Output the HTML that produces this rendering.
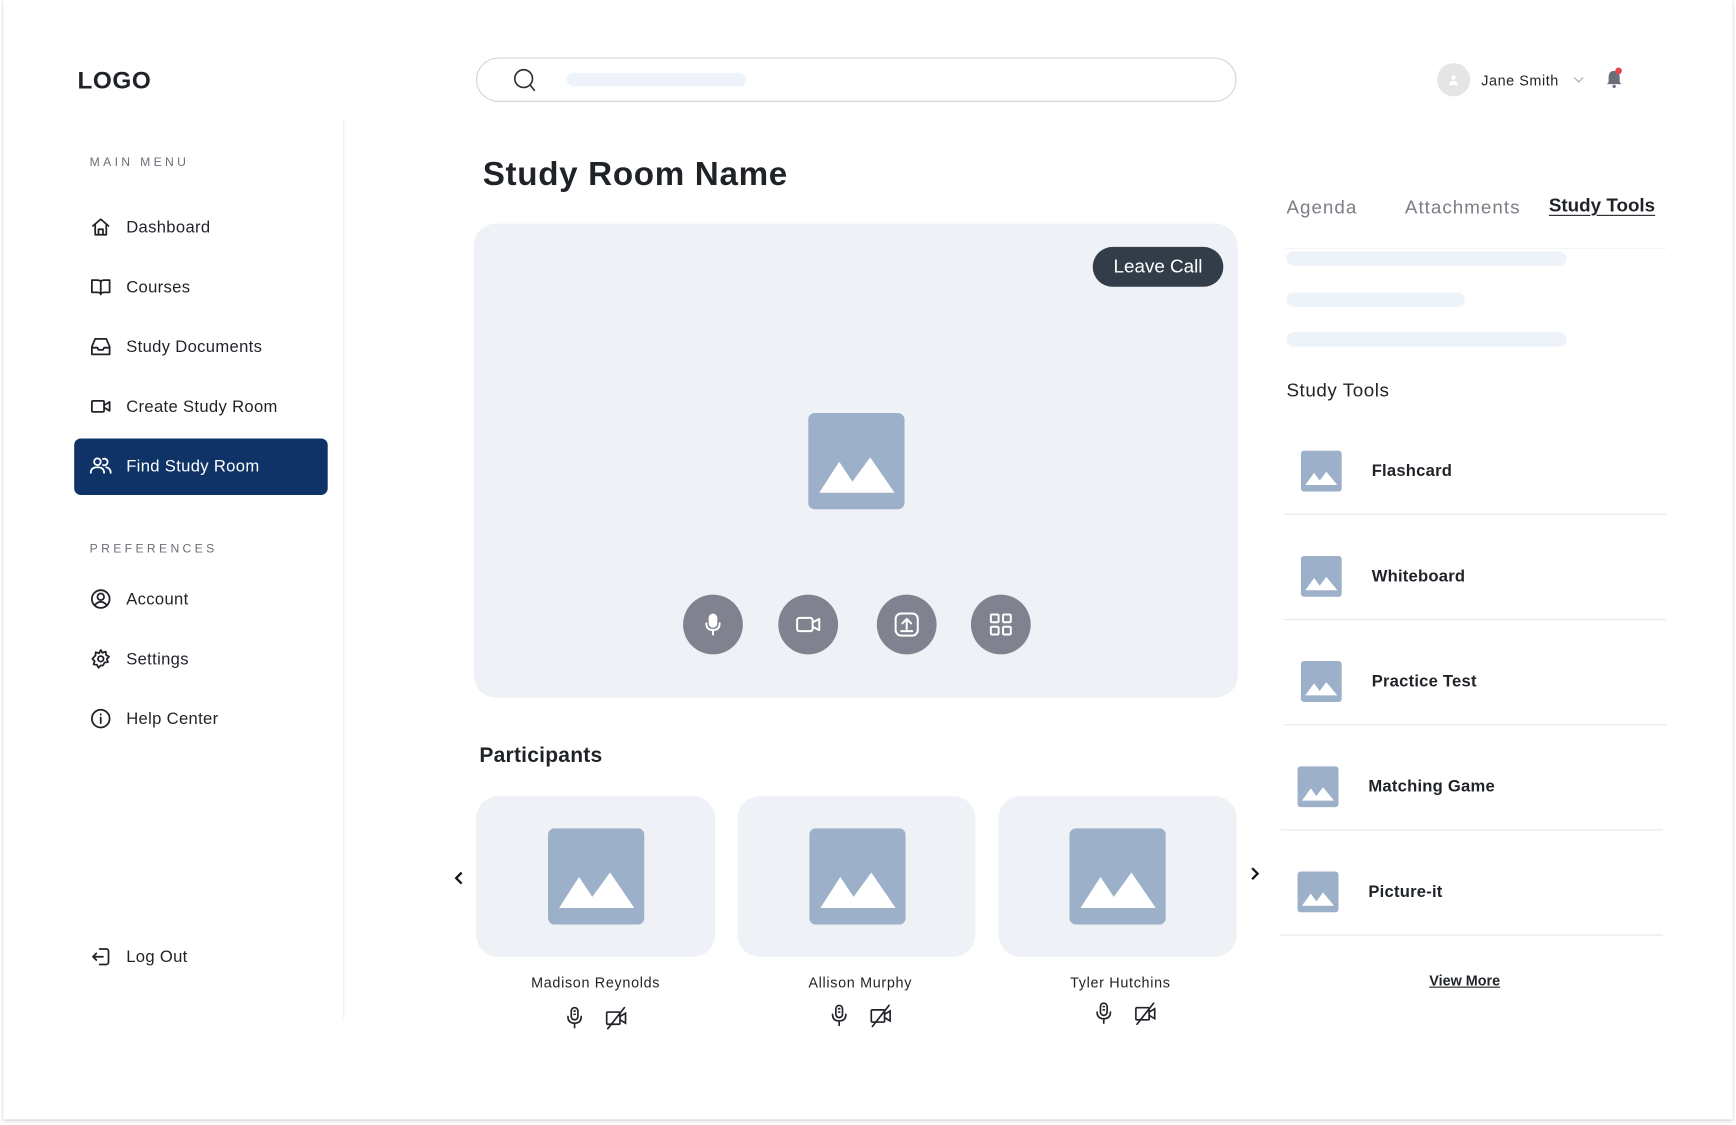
<!DOCTYPE html>
<html><head><meta charset="utf-8"><style>
*{box-sizing:border-box;margin:0;padding:0}
html,body{width:1736px;height:1125px;overflow:hidden;background:#fff;font-family:"Liberation Sans",sans-serif;color:#1f2328}
#w{position:absolute;left:0;top:0;width:1568px;height:1016px;transform:scale(1.1071,1.1073);transform-origin:0 0}
.a{position:absolute}
.frame{left:3px;top:0;width:1562px;height:1011px;box-shadow:0 1px 3px rgba(0,0,0,.25);background:#fff}
.mi{position:absolute;left:81px;font-size:15px;display:flex;align-items:center;gap:13px;color:#1f2328;letter-spacing:.3px}
.mi svg{width:20px;height:20px;fill:none;stroke:#1f2328;stroke-width:1.6;stroke-linecap:round;stroke-linejoin:round}
.cap{font-size:11px;letter-spacing:3px;color:#6b6f76}
.card{background:#eef1f6;border-radius:20px}
.cb{position:absolute;width:54px;height:54px;border-radius:50%;background:#80838f;display:flex;align-items:center;justify-content:center}
.cb svg{width:26px;height:26px;fill:none;stroke:#fff;stroke-width:1.8;stroke-linecap:round;stroke-linejoin:round}
.nm{position:absolute;font-size:13px;letter-spacing:.6px;text-align:center;width:216px}
.ic svg{width:20px;height:22px;fill:none;stroke:#1f2328;stroke-width:1.5;stroke-linecap:round}
.tool{position:absolute;left:1160px;width:345px;height:95px;border-bottom:1px solid #e6e8ec}
.tool svg{position:absolute;left:15px;top:37px;width:37px;height:37px}
.tool span{position:absolute;left:79px;top:47px;font-size:15px;font-weight:bold;letter-spacing:.2px}
.sk{position:absolute;background:#eef2f9;border-radius:7px;height:13px}
</style></head><body><div id="w">
<div class="a frame"></div>
<div class="a" style="left:70px;top:60px;font-size:22px;font-weight:bold;letter-spacing:.5px">LOGO</div>
<div class="a" style="left:310px;top:108px;width:1px;height:812px;background:#f0f1f3"></div>
<div class="a cap" style="left:81px;top:141px">MAIN MENU</div>
<div class="mi" style="top:195px"><svg viewBox="0 0 20 20"><path d="M3 9L10 3l7 6M5 8v9h10V8M8 17v-5h4v5"/></svg>Dashboard</div>
<div class="mi" style="top:249px"><svg viewBox="0 0 20 20"><path d="M2 4h5q3 0 3 2v11q0-2-3-2H2zM18 4h-5q-3 0-3 2v11q0-2 3-2h5z"/></svg>Courses</div>
<div class="mi" style="top:303px"><svg viewBox="0 0 20 20"><path d="M2 10l3-7h10l3 7v7H2zM2 11h5l1 2h4l1-2h5"/></svg>Study Documents</div>
<div class="mi" style="top:357px"><svg viewBox="0 0 20 20"><rect x="2" y="5" width="11" height="10" rx="1"/><path d="M13 9l5-3v8l-5-3"/></svg>Create Study Room</div>
<div class="a" style="left:67px;top:396px;width:229px;height:51px;background:#0f3366;border-radius:6px"></div>
<div class="mi" style="top:411px;color:#fff"><svg viewBox="0 0 20 20" style="stroke:#fff"><circle cx="7" cy="6" r="3"/><path d="M1 16q0-5 6-5t6 5M12 3.5a3 3 0 110 5.5M15 11q4 1 4 5"/></svg>Find Study Room</div>
<div class="a cap" style="left:81px;top:490px">PREFERENCES</div>
<div class="mi" style="top:531px"><svg viewBox="0 0 20 20"><circle cx="10" cy="10" r="8"/><circle cx="10" cy="8" r="3"/><path d="M5 15q5-5 10 0"/></svg>Account</div>
<div class="mi" style="top:585px"><svg viewBox="0 0 20 20"><circle cx="10" cy="10" r="2.5"/><path d="M10 2l1.5 2.5 3-1 .3 3 2.7 1.5-2 2.2 1 2.8-3 .3-1.5 2.7L10 16l-2 2-1.5-2.7-3-.3 1-2.8-2-2.2L5.2 7l.3-3 3 1z"/></svg>Settings</div>
<div class="mi" style="top:639px"><svg viewBox="0 0 20 20"><circle cx="10" cy="10" r="8"/><path d="M10 9v5M10 6v.5"/></svg>Help Center</div>
<div class="mi" style="top:854px"><svg viewBox="0 0 20 20"><path d="M9 3h6a2 2 0 012 2v10a2 2 0 01-2 2H9M12 10H3M6 7l-3 3 3 3"/></svg>Log Out</div>

<div class="a" style="left:430px;top:52px;width:687px;height:40px;border:1px solid #cfd3d9;border-radius:20px"></div>
<svg class="a" style="left:462px;top:61px" width="24" height="24" viewBox="0 0 24 24" fill="none" stroke="#333" stroke-width="1.5"><circle cx="11" cy="10" r="8"/><path d="M17 16l4 5"/></svg>
<div class="sk" style="left:512px;top:66px;width:162px;height:12px;border-radius:6px"></div>
<div class="a" style="left:1298px;top:57px;width:30px;height:30px;border-radius:50%;background:#e4e5e7"></div>
<svg class="a" style="left:1307px;top:66px" width="12" height="12" viewBox="0 0 12 12" fill="#fff"><circle cx="6" cy="4" r="2"/><path d="M2 11q0-4 4-4t4 4z"/></svg>
<div class="a" style="left:1338px;top:65px;font-size:13px;letter-spacing:.5px">Jane Smith</div>
<svg class="a" style="left:1421px;top:69px" width="10" height="6" viewBox="0 0 10 6" fill="none" stroke="#aaa"><path d="M1 1l4 4 4-4"/></svg>
<svg class="a" style="left:1450px;top:62px" width="16" height="18" viewBox="0 0 16 18" fill="#6b6f7c"><path d="M8 2q5 0 5 6v4l1.5 2h-13L3 12V8q0-6 5-6z"/><circle cx="8" cy="16" r="1.5"/></svg>
<div class="a" style="left:1459px;top:61px;width:6px;height:6px;border-radius:50%;background:#e0484b"></div>

<div class="a" style="left:436px;top:141px;font-size:30px;font-weight:bold;letter-spacing:.6px">Study Room Name</div>
<div class="a card" style="left:428px;top:202px;width:690px;height:428px"></div>
<div class="a" style="left:987px;top:223px;width:118px;height:36px;border-radius:18px;background:#333d4a;color:#fff;font-size:17px;text-align:center;line-height:36px">Leave Call</div>
<svg class="a" style="left:730px;top:373px" width="87" height="87" viewBox="0 0 87 87"><rect width="87" height="87" rx="6" fill="#9db0c9"/><path d="M10 72l18-28 12 18 16-22 22 32z" fill="#fff"/></svg>
<div class="cb" style="left:617px;top:537px"><svg viewBox="0 0 26 26"><rect x="10" y="4" width="6" height="11" rx="3" fill="#fff"/><path d="M7 12q0 6 6 6t6-6M13 18v4"/></svg></div>
<div class="cb" style="left:703px;top:537px"><svg viewBox="0 0 26 26"><rect x="3" y="7" width="14" height="12" rx="2"/><path d="M17 11l6-3v10l-6-3"/></svg></div>
<div class="cb" style="left:792px;top:537px"><svg viewBox="0 0 26 26"><rect x="3" y="3" width="20" height="20" rx="5"/><path d="M13 17V8M9 12l4-4 4 4M8 19h10"/></svg></div>
<div class="cb" style="left:877px;top:537px"><svg viewBox="0 0 26 26"><rect x="4" y="4" width="7" height="7" rx="1"/><rect x="15" y="4" width="7" height="7" rx="1"/><rect x="4" y="15" width="7" height="7" rx="1"/><rect x="15" y="15" width="7" height="7" rx="1"/></svg></div>

<div class="a" style="left:433px;top:672px;font-size:19px;font-weight:bold;letter-spacing:.2px">Participants</div>
<svg class="a" style="left:410px;top:787px" width="10" height="12" viewBox="0 0 10 12" fill="none" stroke="#111" stroke-width="2"><path d="M7 1L2 6l5 5"/></svg>
<svg class="a" style="left:1128px;top:783px" width="10" height="12" viewBox="0 0 10 12" fill="none" stroke="#111" stroke-width="2"><path d="M3 1l5 5-5 5"/></svg>

<div class="a card" style="left:430px;top:719px;width:216px;height:145px"></div>
<div class="a card" style="left:666px;top:719px;width:215px;height:145px"></div>
<div class="a card" style="left:902px;top:719px;width:215px;height:145px"></div>
<svg class="a" style="left:495px;top:748px" width="87" height="87" viewBox="0 0 87 87"><rect width="87" height="87" rx="6" fill="#9db0c9"/><path d="M10 72l18-28 12 18 16-22 22 32z" fill="#fff"/></svg>
<svg class="a" style="left:731px;top:748px" width="87" height="87" viewBox="0 0 87 87"><rect width="87" height="87" rx="6" fill="#9db0c9"/><path d="M10 72l18-28 12 18 16-22 22 32z" fill="#fff"/></svg>
<svg class="a" style="left:966px;top:748px" width="87" height="87" viewBox="0 0 87 87"><rect width="87" height="87" rx="6" fill="#9db0c9"/><path d="M10 72l18-28 12 18 16-22 22 32z" fill="#fff"/></svg>
<div class="nm" style="left:430px;top:880px">Madison Reynolds</div>
<div class="nm" style="left:669px;top:880px">Allison Murphy</div>
<div class="nm" style="left:904px;top:880px">Tyler Hutchins</div>

<div class="a ic" style="left:509px;top:908px;display:flex;gap:17px"><svg viewBox="0 0 20 22"><rect x="7" y="2" width="6" height="11" rx="3"/><path d="M9.5 5h1M9.5 8h1M4 10q0 6 6 6t6-6M10 16v4"/></svg><svg viewBox="0 0 20 22"><rect x="2" y="6" width="12" height="11" rx="1"/><path d="M14 10l5-3v9l-5-3M3 21L18 2"/></svg></div>
<div class="a ic" style="left:748px;top:906px;display:flex;gap:17px"><svg viewBox="0 0 20 22"><rect x="7" y="2" width="6" height="11" rx="3"/><path d="M9.5 5h1M9.5 8h1M4 10q0 6 6 6t6-6M10 16v4"/></svg><svg viewBox="0 0 20 22"><rect x="2" y="6" width="12" height="11" rx="1"/><path d="M14 10l5-3v9l-5-3M3 21L18 2"/></svg></div>
<div class="a ic" style="left:987px;top:904px;display:flex;gap:17px"><svg viewBox="0 0 20 22"><rect x="7" y="2" width="6" height="11" rx="3"/><path d="M9.5 5h1M9.5 8h1M4 10q0 6 6 6t6-6M10 16v4"/></svg><svg viewBox="0 0 20 22"><rect x="2" y="6" width="12" height="11" rx="1"/><path d="M14 10l5-3v9l-5-3M3 21L18 2"/></svg></div>

<div class="a" style="left:1162px;top:178px;font-size:17px;color:#7b7e86;letter-spacing:.9px">Agenda</div>
<div class="a" style="left:1269px;top:178px;font-size:17px;color:#7b7e86;letter-spacing:.9px">Attachments</div>
<div class="a" style="left:1399px;top:176px;font-size:17px;font-weight:bold;text-decoration:underline;text-underline-offset:3px">Study Tools</div>
<div class="a" style="left:1160px;top:224px;width:345px;height:1px;background:#f3f4f6"></div>
<div class="sk" style="left:1162px;top:227px;width:253px"></div>
<div class="sk" style="left:1162px;top:264px;width:161px"></div>
<div class="sk" style="left:1162px;top:300px;width:253px"></div>
<div class="a" style="left:1162px;top:343px;font-size:17px;letter-spacing:.5px">Study Tools</div>
<div class="tool" style="top:370px"><svg viewBox="0 0 37 37"><rect width="37" height="37" rx="3" fill="#9db0c9"/><path d="M4 31l8-11 5 7 6-8 10 12z" fill="#fff"/></svg><span>Flashcard</span></div>
<div class="tool" style="top:465px"><svg viewBox="0 0 37 37"><rect width="37" height="37" rx="3" fill="#9db0c9"/><path d="M4 31l8-11 5 7 6-8 10 12z" fill="#fff"/></svg><span>Whiteboard</span></div>
<div class="tool" style="top:560px"><svg viewBox="0 0 37 37"><rect width="37" height="37" rx="3" fill="#9db0c9"/><path d="M4 31l8-11 5 7 6-8 10 12z" fill="#fff"/></svg><span>Practice Test</span></div>
<div class="tool" style="top:655px;left:1157px"><svg viewBox="0 0 37 37"><rect width="37" height="37" rx="3" fill="#9db0c9"/><path d="M4 31l8-11 5 7 6-8 10 12z" fill="#fff"/></svg><span>Matching Game</span></div>
<div class="tool" style="top:750px;left:1157px"><svg viewBox="0 0 37 37"><rect width="37" height="37" rx="3" fill="#9db0c9"/><path d="M4 31l8-11 5 7 6-8 10 12z" fill="#fff"/></svg><span>Picture-it</span></div>
<div class="a" style="left:1273px;top:878px;width:100px;text-align:center;font-size:13px;font-weight:bold;text-decoration:underline">View More</div>
</div>
</body></html>
